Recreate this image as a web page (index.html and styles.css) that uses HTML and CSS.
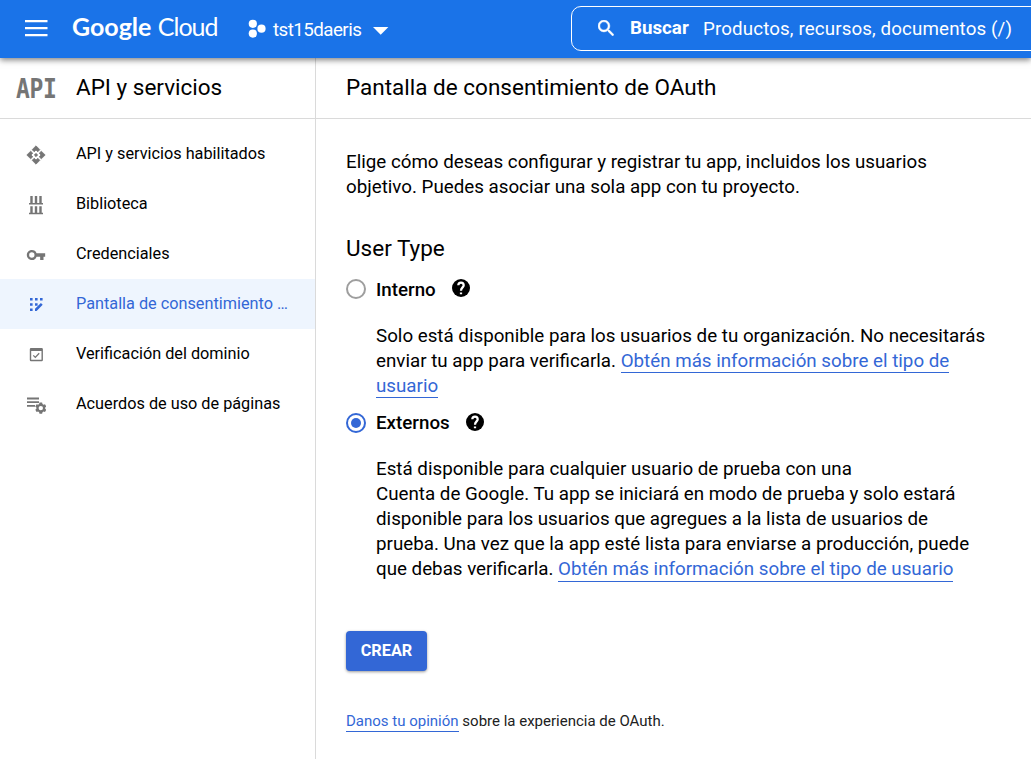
FILE: index.html
```html
<!DOCTYPE html>
<html lang="es">
<head>
<meta charset="utf-8">
<title>Pantalla de consentimiento de OAuth</title>
<link rel="stylesheet" href="styles.css">
</head>
<body>
<header class="topbar">
  <svg class="menu" viewBox="0 0 24 18"><path d="M0 2.100h22.500M0 9.100h22.500M0 16.100h22.500" stroke="#fff" stroke-width="2.300"/></svg>
  <div class="logo"><b>Google</b> <span>Cloud</span></div>
  <div class="project">
    <svg class="project-icon" viewBox="0 0 18 20"><g fill="#fff"><circle cx="4.800" cy="4.800" r="4.100"/><circle cx="4.800" cy="14.600" r="4.100"/><circle cx="13.500" cy="9.700" r="4.100"/></g></svg>
    <span class="project-name">tst15daeris</span>
    <svg class="caret" viewBox="0 0 16 8"><path d="M0 0h15.400L7.700 7.800z" fill="#fff"/></svg>
  </div>
  <div class="search">
    <svg class="search-icon" viewBox="3 3 17.500 17.500"><path fill="#fff" stroke="#fff" stroke-width=".5" d="M15.500 14h-.79l-.28-.27A6.471 6.471 0 0 0 16 9.500 6.500 6.500 0 1 0 9.500 16c1.610 0 3.090-.59 4.230-1.570l.27.28v.79l5 4.990L20.490 19l-4.990-5zm-6 0C7.010 14 5 11.990 5 9.500S7.010 5 9.500 5 14 7.010 14 9.500 11.990 14 9.500 14z"/></svg>
    <b>Buscar</b><span class="hint">Productos, recursos, documentos (/)</span>
  </div>
</header>
<div class="layout">
  <nav class="sidebar">
    <div class="side-head"><span class="api">API</span><h2>API y servicios</h2></div>
    <ul class="items">
      <li><svg viewBox="0 0 24 24"><path stroke="#757575" stroke-width=".9" d="M14 12l-2 2-2-2 2-2 2 2zm-2-6l2.120 2.120 2.500-2.500L12 1 7.380 5.620l2.500 2.500L12 6zm-6 6l2.120-2.120-2.500-2.500L1 12l4.620 4.620 2.500-2.500L6 12zm12 0l-2.120 2.120 2.500 2.500L23 12l-4.620-4.620-2.500 2.500L18 12zm-6 6l-2.120-2.120-2.500 2.500L12 23l4.620-4.620-2.500-2.500L12 18z"/></svg><span>API y servicios habilitados</span></li>
      <li><svg viewBox="0 0 20 20"><path d="M3 8h14v1.500H3zM3 17.700h14v1.500H3zM4.300 1H6.700v7H4.300zM8.800 1h2.400v7H8.800zM13.300 1h2.400v7h-2.400zM4.300 11.200H6.700v7H4.300zM8.800 11.200h2.400v7H8.800zM13.300 11.200h2.400v7h-2.400z"/></svg><span>Biblioteca</span></li>
      <li><svg viewBox="0 0 24 24"><path d="M12.650 10A5.990 5.990 0 0 0 7 6c-3.310 0-6 2.690-6 6s2.690 6 6 6a5.990 5.990 0 0 0 5.650-4H17v4h4v-4h2v-4H12.650zM7 15.200a3.200 3.200 0 1 1 0-6.400 3.200 3.200 0 0 1 0 6.400z"/></svg><span>Credenciales</span></li>
      <li class="active"><svg viewBox="0 0 20 20"><path d="M4 3h2.600v2.600H4zM9 3h2.600v2.600H9zM14 3h2.600v2.600H14zM4 8.200h2.600v2.600H4zM9 8.200h2.600v2.600H9zM4 13.400h2.600V16H4zM9 16v-2.200L14.900 8l1.800 1.800-6.100 6.200z"/></svg><span>Pantalla de consentimiento …</span></li>
      <li><svg viewBox="0 0 20 20"><path fill-rule="evenodd" d="M5 3h10.700a1.200 1.200 0 0 1 1.200 1.200v10.800a1.200 1.200 0 0 1-1.200 1.200H5a1.200 1.200 0 0 1-1.200-1.200V4.200A1.200 1.200 0 0 1 5 3zm.2 3v8.800h10.300V6z"/><path class="tick" d="M7.300 10.400l2 2 3.900-4.200"/></svg><span>Verificación del dominio</span></li>
      <li><svg viewBox="0 0 20 20"><path d="M1 2.500h12v1.900H1zM1 6.200h12v1.900H1zM1 9.900h8v1.900H1z"/><path fill-rule="evenodd" d="M13.500 7.600h2.600l.4 1.500 1 .6 1.500-.5 1.300 2.300-1.100 1.100v1.100l1.100 1.100-1.300 2.300-1.500-.5-1 .6-.4 1.500h-2.600l-.4-1.500-1-.6-1.500.5-1.300-2.300 1.100-1.100v-1.100l-1.100-1.100 1.300-2.300 1.500.5 1-.6zM14.800 10.900a2.200 2.200 0 1 0 0 4.400 2.200 2.200 0 0 0 0-4.400z"/></svg><span>Acuerdos de uso de páginas</span></li>
    </ul>
  </nav>
  <main>
    <div class="title"><h1>Pantalla de consentimiento de OAuth</h1></div>
    <div class="content">
      <p>Elige cómo deseas configurar y registrar tu app, incluidos los usuarios<br>objetivo. Puedes asociar una sola app con tu proyecto.</p>
      <h3>User Type</h3>
      <div class="option"><i class="radio"></i><b>Interno</b><svg viewBox="2 2 20 20"><circle cx="12" cy="12" r="10"/><path class="mark" d="M9 9a3 3 0 0 1 6 0c0 2.300-3 2.500-3 6M12 17v2"/></svg></div>
      <p class="desc internal">Solo está disponible para los usuarios de tu organización. No necesitarás<br>enviar tu app para verificarla. <a>Obtén más información sobre el tipo de</a><br><a>usuario</a></p>
      <div class="option second"><i class="radio on"></i><b>Externos</b><svg viewBox="2 2 20 20"><circle cx="12" cy="12" r="10"/><path class="mark" d="M9 9a3 3 0 0 1 6 0c0 2.300-3 2.500-3 6M12 17v2"/></svg></div>
      <p class="desc">Está disponible para cualquier usuario de prueba con una<br>Cuenta de Google. Tu app se iniciará en modo de prueba y solo estará<br>disponible para los usuarios que agregues a la lista de usuarios de<br>prueba. Una vez que la app esté lista para enviarse a producción, puede<br>que debas verificarla. <a>Obtén más información sobre el tipo de usuario</a></p>
      <button>CREAR</button>
      <p class="feedback"><a>Danos tu opinión</a> sobre la experiencia de OAuth.</p>
    </div>
  </main>
</div>
</body>
</html>
```
FILE: styles.css
```css
* { box-sizing: border-box; margin: 0; padding: 0; }
body { width: 1031px; height: 759px; overflow: hidden; background: #fff; color: #000; font-family: Roboto, sans-serif; }
svg { display: block; flex: none; }
h1, h2, h3 { font-weight: 400; font-size: 22.500px; line-height: 30px; }
.topbar { position: relative; z-index: 1; display: flex; height: 58px; padding-left: 25px; background: #1a73e8; color: #fff; box-shadow: 0 2px 6px rgba(0,0,0,.5); }
.menu { width: 24px; height: 18px; margin-top: 19px; }
.logo { width: 151px; margin-left: 23px; padding-top: 9px; font: 25px/34px Lato, sans-serif; white-space: nowrap; }
.logo b { font-weight: 700; }
.logo span { letter-spacing: -1px; }
.project { display: flex; width: 323px; padding: 19px 0 0 25px; }
.project-icon { width: 18px; height: 20px; }
.project-name { width: 90px; margin-left: 7px; font-size: 18.750px; line-height: 22px; letter-spacing: -.55px; }
.caret { width: 16px; height: 8px; margin: 8px 0 0 10px; }
.search { display: flex; flex: 1; height: 45px; margin: 6px -10px 0 25px; padding-left: 26px; border: 1px solid #fff; border-radius: 10px; font-size: 18.750px; line-height: 42px; white-space: nowrap; }
.search-icon { width: 16px; height: 16px; margin: 13px 1px 0 0; }
.search b { width: 59px; margin-left: 15px; }
.hint { margin-left: 14px; line-height: 44px; letter-spacing: .12px; }
.layout { display: flex; height: 701px; }
.sidebar { width: 316px; border-right: 1px solid #dadada; }
.side-head, .title { display: flex; align-items: center; height: 61px; padding-bottom: 2px; border-bottom: 1px solid #dadada; }
.api { width: 40px; margin: 3px 0 0 16px; color: #757575; font: 700 23px/30px "DejaVu Sans Mono", monospace; letter-spacing: -.4px; transform: scaleY(1.17); }
.side-head h2 { margin-left: 20px; }
.items { padding-top: 10px; list-style: none; }
.items li { display: flex; align-items: center; height: 50px; padding: 0 0 1px 26px; font-size: 16.250px; white-space: nowrap; }
.items svg { width: 20px; height: 20px; margin-right: 30px; margin-top: 2px; fill: #757575; }
.items li.active { background: #eef5fe; color: #3367d6; }
.items .active svg { fill: #3367d6; }
.items .tick { fill: none; stroke: #757575; stroke-width: 1.300; }
main { flex: 1; }
.title { padding-left: 30px; }
.content { padding: 31px 0 0 30px; }
.content p { font-size: 18.750px; line-height: 25px; white-space: nowrap; }
.content h3 { margin-top: 33px; }
.option { display: flex; align-items: center; height: 22px; margin-top: 15px; font-size: 18.750px; }
.option b { margin: 1px 0 0 10px; font-weight: 500; }
.option svg { width: 18px; height: 18px; margin: -2px 0 0 16px; }
.mark { fill: none; stroke: #fff; stroke-width: 2.500; }
.radio { display: grid; place-items: center; width: 20px; height: 20px; border: 2px solid #9e9e9e; border-radius: 50%; }
.radio.on { border-color: #3367d6; }
.radio.on::after { content: ""; width: 10px; height: 10px; border-radius: 50%; background: #3367d6; }
.content .desc { margin: 24px 0 0 30px; }
.option.second { margin-top: 13px; }
.option.second b { margin-top: 0; }
.content .option.second + .desc { margin-top: 23px; }
a { color: #3367d6; border-bottom: 1px solid #3367d6; padding-bottom: 1px; }
.internal a { padding-bottom: 0; }
button { display: block; width: 81px; height: 40px; margin-top: 49px; padding-bottom: 2px; border: 0; border-radius: 4px; background: #3367d6; color: #fff; font: 700 16.250px Roboto, sans-serif; box-shadow: 0 1px 3px rgba(0,0,0,.4); }
.content .feedback { margin-top: 38px; font-size: 15px; color: #212121; }
```
